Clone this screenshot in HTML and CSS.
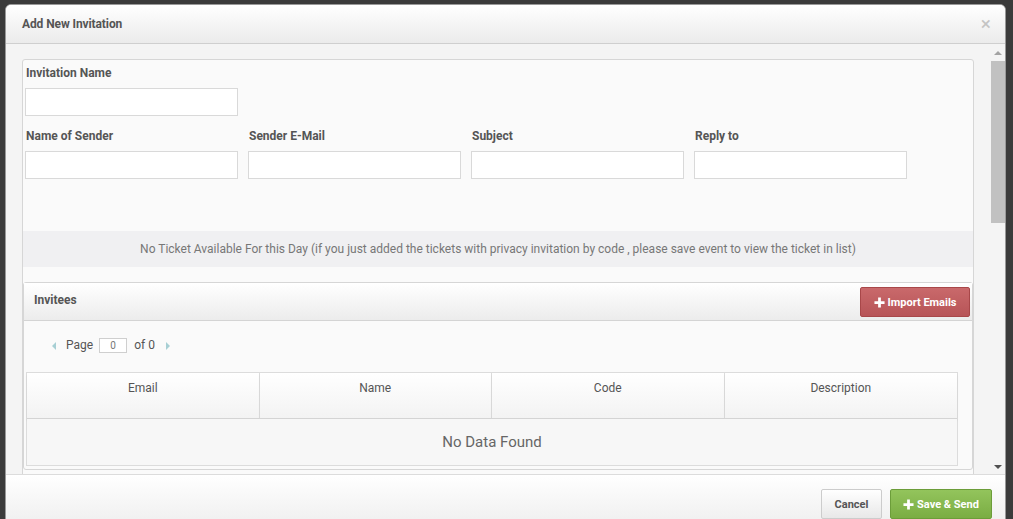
FILE: index.html
```html
<!DOCTYPE html>
<html>
<head>
<meta charset="utf-8">
<link rel="stylesheet" href="styles.css">
</head>
<body>
<div class="modal">
  <div class="modal-header">
    <span class="title">Add New Invitation</span>
    <span class="close">×</span>
  </div>
  <div class="modal-body">
    <div class="content">
      <div class="panel">
        <div class="row row1">
          <div class="field"><label class="lbl">Invitation Name</label><input class="inp" type="text"></div>
        </div>
        <div class="row row2">
          <div class="field"><label class="lbl">Name of Sender</label><input class="inp" type="text"></div>
          <div class="field"><label class="lbl">Sender E-Mail</label><input class="inp" type="text"></div>
          <div class="field"><label class="lbl">Subject</label><input class="inp" type="text"></div>
          <div class="field"><label class="lbl">Reply to</label><input class="inp" type="text"></div>
        </div>
        <div class="notice">No Ticket Available For this Day (if you just added the tickets with privacy invitation by code , please save event to view the ticket in list)</div>
        <div class="invitees">
          <div class="inv-header">
            <span class="inv-title">Invitees</span>
            <button class="btn btn-red"><svg class="plus" viewBox="0 0 12 12"><path d="M6 0.5V11.5M0.5 6H11.5"/></svg>Import Emails</button>
          </div>
          <div class="pager">
            <span class="tri tri-left"></span>
            <span class="ptxt">Page</span>
            <span class="pinput">0</span>
            <span class="ptxt">of 0</span>
            <span class="tri tri-right"></span>
          </div>
          <div class="grid">
            <div class="gh">Email</div>
            <div class="gh">Name</div>
            <div class="gh">Code</div>
            <div class="gh last">Description</div>
            <div class="nodata">No Data Found</div>
          </div>
        </div>
        <div class="panel-rest"></div>
      </div>
    </div>
    <div class="scrollbar">
      <div class="sb-arrow sb-up"></div>
      <div class="sb-thumb"></div>
      <div class="sb-track"></div>
      <div class="sb-arrow sb-down"></div>
    </div>
  </div>
  <div class="modal-footer">
    <button class="btn btn-cancel">Cancel</button>
    <button class="btn btn-green"><svg class="plus" viewBox="0 0 12 12"><path d="M6 0.5V11.5M0.5 6H11.5"/></svg>Save &amp; Send</button>
  </div>
</div>
</body>
</html>
```

FILE: styles.css
```css
* { box-sizing: border-box; }
html, body { margin: 0; padding: 0; }
body {
  background: #3b3b3b;
  width: 1013px;
  height: 519px;
  overflow: hidden;
  font-family: Roboto, "Liberation Sans", Arial, sans-serif;
  color: #555;
}
.modal {
  margin: 4px 0 0 5px;
  width: 1001px;
  height: 530px;
  border: 1px solid #999;
  border-radius: 6px 6px 0 0;
  background: #f4f4f4;
  overflow: hidden;
}
.modal-header {
  height: 39px;
  border-bottom: 1px solid #cfcfcf;
  background: linear-gradient(#ffffff, #ebebeb);
  display: flex;
  align-items: center;
  justify-content: space-between;
  padding: 0 14px 0 16px;
}
.title {
  font-size: 12px;
  font-weight: 700;
  color: #555;
  letter-spacing: -0.1px;
}
.close {
  font-size: 19px;
  color: #c4c4c4;
  line-height: 1;
  margin-top: -1px;
}
.modal-body {
  height: 430px;
  display: flex;
  overflow: hidden;
}
.content {
  width: 984px;
  padding: 15px 0 0 16px;
}
.panel {
  width: 952px;
  border: 1px solid #d6d6d6;
  border-radius: 3px;
  background: #fafafa;
}
.row {
  display: flex;
  gap: 10px;
  padding-left: 2px;
}
.row1 { padding-top: 6px; }
.row2 { margin-top: 13px; }
.field { display: flex; flex-direction: column; width: 213px; }
.lbl {
  font-size: 12px;
  font-weight: 700;
  line-height: 14px;
  margin-bottom: 8px;
  padding-left: 1px;
  color: #555;
}
.inp {
  width: 213px;
  height: 28px;
  border: 1px solid #d9d9d9;
  background: #fff;
  margin: 0;
  padding: 0 6px;
}
.notice {
  margin-top: 52px;
  height: 36px;
  background: #f0f0f2;
  font-size: 12px;
  color: #777;
  display: flex;
  align-items: center;
  justify-content: center;
}
.invitees {
  margin-top: 15px;
  border: 1px solid #d6d6d6;
  border-radius: 3px;
  padding-bottom: 3px;
  background: #fafafa;
}
.inv-header {
  height: 38px;
  border-bottom: 1px solid #d4d4d4;
  background: linear-gradient(#ffffff, #ececec);
  display: flex;
  justify-content: space-between;
  align-items: flex-start;
  padding: 4px 2px 0 10px;
}
.inv-title {
  font-size: 12px;
  font-weight: 700;
  line-height: 14px;
  margin-top: 6px;
  color: #555;
}
.btn {
  font-family: Roboto, "Liberation Sans", Arial, sans-serif;
  font-size: 11px;
  font-weight: 700;
  height: 30px;
  border-radius: 2px;
  display: inline-flex;
  align-items: center;
  justify-content: center;
  padding: 0;
  cursor: pointer;
}
.plus {
  width: 11px;
  height: 11px;
  margin-right: 3px;
  fill: none;
  stroke: #fff;
  stroke-width: 3;
}
.btn-red {
  width: 110px;
  color: #fff;
  background: linear-gradient(#c9696b, #b75457);
  border: 1px solid #a84749;
}
.pager {
  display: flex;
  align-items: center;
  padding: 17px 0 19px 28px;
  height: 51px;
}
.tri {
  width: 0;
  height: 0;
  border-top: 4px solid transparent;
  border-bottom: 4px solid transparent;
}
.tri-left { border-right: 4px solid #a7cfd4; margin-right: 10px; }
.tri-right { border-left: 4px solid #a7cfd4; margin-left: 11px; }
.ptxt { font-size: 12px; color: #555; line-height: 15px; }
.pinput {
  width: 28px;
  height: 15px;
  border: 1px solid #cfcfcf;
  background: #fff;
  font-size: 10px;
  color: #777;
  text-align: center;
  line-height: 13px;
  margin: 0 7px 0 6px;
}
.grid {
  margin-left: 2px;
  width: 932px;
  border: 1px solid #dcdcdc;
  display: grid;
  grid-template-columns: repeat(4, 1fr);
}
.gh {
  height: 46px;
  padding-top: 8px;
  text-align: center;
  font-size: 12px;
  line-height: 14px;
  color: #555;
  background: linear-gradient(#ffffff, #f3f3f3);
  border-right: 1px solid #dcdcdc;
  border-bottom: 1px solid #d4d4d4;
  box-shadow: 0 2px 2px rgba(0,0,0,0.06);
}
.gh.last { border-right: none; }
.nodata {
  grid-column: 1 / 5;
  height: 46px;
  display: flex;
  align-items: center;
  justify-content: center;
  font-size: 15px;
  color: #666;
  background: #f7f7f7;
}
.panel-rest { height: 40px; }
.scrollbar {
  width: 15px;
  display: flex;
  flex-direction: column;
  align-items: center;
  background: #f4f4f4;
  padding-top: 7px;
}
.sb-arrow {
  width: 0;
  height: 0;
  border-left: 4px solid transparent;
  border-right: 4px solid transparent;
}
.sb-up { border-bottom: 4px solid #a3a3a3; }
.sb-down { border-top: 4px solid #505050; margin-bottom: 5px; }
.sb-thumb {
  width: 14px;
  height: 162px;
  background: #c1c1c1;
  margin-top: 6px;
}
.sb-track { flex: 1; }
.modal-footer {
  border-top: 1px solid #dcdcdc;
  background: linear-gradient(#ffffff, #ececec);
  height: 60px;
  display: flex;
  justify-content: flex-end;
  align-items: flex-start;
  gap: 8px;
  padding: 14px 13px 0 0;
}
.btn-cancel {
  width: 61px;
  color: #555;
  background: linear-gradient(#ffffff, #e8e8e8);
  border: 1px solid #cccccc;
}
.btn-green {
  width: 102px;
  color: #fff;
  background: linear-gradient(#93c45c, #7aad43);
  border: 1px solid #6c9d3a;
}
```
